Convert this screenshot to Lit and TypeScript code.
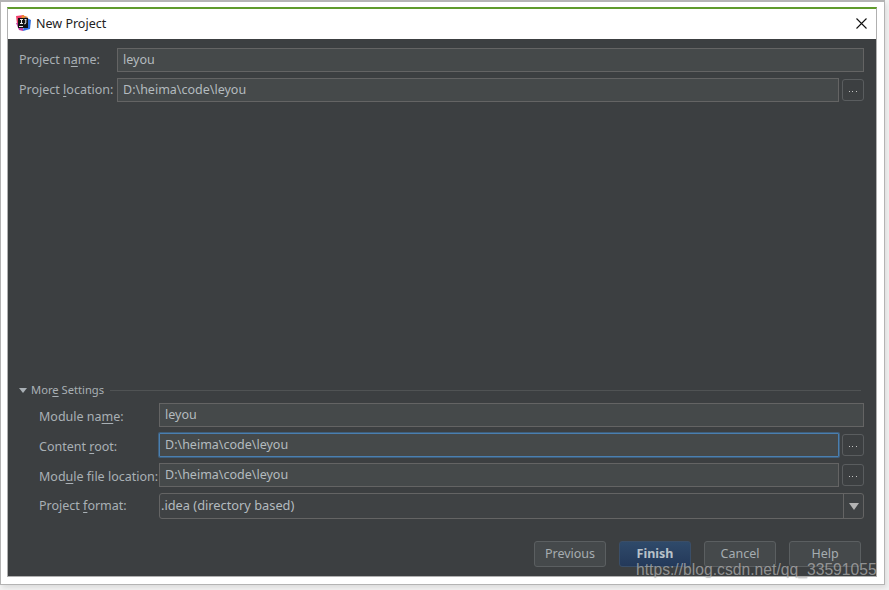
import { LitElement, html, css } from "lit";
import { customElement } from "lit/decorators.js";

@customElement("app-root")
export class AppRoot extends LitElement {
  static styles = css`
    :host { display: block; width: 889px; height: 590px; position: relative; overflow: hidden; background: #f4f4f4;
      font-family: "Noto Sans", "Open Sans", sans-serif; font-size: 12.5px; color: #a9b0b5; }
    * { box-sizing: border-box; }
    .frame { width: 885px; height: 585px; background: #fff; border: 1px solid #b4b4b4; border-top-width: 2px; padding: 5px 7px 6px 6px; box-shadow: 2px 3px 5px #ddd; }
    .win { height: 570px; border: 1px solid #b0b0b0; border-top: 2px solid #5f9b2c; display: flex; flex-direction: column; }
    .title { height: 30px; flex: none; background: #fff; display: flex; align-items: center; padding: 0 9px 2px 7px; color: #222; font-size: 12.5px; gap: 5px; }
    .title svg.logo { flex: none; }
    .title span { flex: 1; }
    .body { flex: 1; background: #3c3f41; display: flex; flex-direction: column; padding: 9px 12px 9px 11px; min-height: 0; }
    .row { display: flex; align-items: center; gap: 3px; height: 24px; margin-bottom: 6px; }
    .label { flex: none; white-space: nowrap; }
    .top .label { width: 95px; padding-bottom: 2px; }
    .sub { padding-left: 20px; }
    .sub .label { width: 117px; padding-top: 2px; }
    .sub.fmt .label { padding-top: 0; padding-bottom: 2px; }
    u { text-underline-offset: 2px; text-decoration-thickness: 1px; }
    .field { flex: 1; min-width: 0; height: 24px; background: #45494a; border: 1px solid #646464; padding: 0 5px 2px; display: flex; align-items: center; color: #b4bbbf; }
    .field.focus { border-color: #4a7fb0; box-shadow: 0 0 0 1px #3f5f7c; border-radius: 1px; }
    .dots { flex: none; width: 22px; height: 22px; border: 1px solid #5a5d5f; border-radius: 3px; display: flex; align-items: center; justify-content: center; padding-top: 2px; }
    .dots i { display: block; width: 8px; height: 1px; background: repeating-linear-gradient(90deg, #c4c4c4 0 1px, transparent 1px 3.5px); }
    .spacer { flex: 1; }
    .more { display: flex; align-items: center; height: 16px; margin-bottom: 5px; padding-right: 3px; gap: 4px; font-size: 11.2px; }
    .more div:nth-child(2) { padding-bottom: 2px; }
    .tri { width: 0; height: 0; border-left: 4px solid transparent; border-right: 4px solid transparent; border-top: 5px solid #a9b0b5; flex: none; }
    .more hr { flex: 1; height: 1px; margin: 0 0 0 2px; border: 0; background: #505354; }
    .select { flex: 1; height: 26px; border: 1px solid #646464; border-radius: 3px; display: flex; align-items: stretch; color: #b4bbbf; background: #3f4244; }
    .select span { flex: 1; padding-left: 1px; line-height: 22px; font-size: 12.8px; }
    .arrow { width: 20px; border-left: 1px solid #646464; display: flex; align-items: center; justify-content: center; }
    .arrow b { width: 0; height: 0; border-left: 5px solid transparent; border-right: 5px solid transparent; border-top: 7px solid #b4b4b4; }
    .sub.fmt { height: 26px; margin-bottom: 0; }
    .buttons { display: flex; justify-content: flex-end; gap: 13px; padding: 22px 3px 0 0; }
    .btn { width: 72px; height: 26px; border: 1px solid #5b5f61; border-radius: 3px; background: #45494b; display: flex; align-items: center; justify-content: center; padding-bottom: 2px; color: #a6adb1; }
    .btn.primary { background: linear-gradient(#2f4a6a, #24395a); border-color: #3a4e68; color: #b9c2c9; font-weight: 700; }
    .mark { position: absolute; left: 636px; top: 561px; font-family: "Liberation Sans", sans-serif; font-size: 15.7px; color: rgba(200, 200, 200, 0.62); white-space: nowrap; text-shadow: 0 0 1px rgba(60,60,60,.3); }
  `;

  render() {
    const dots = html`<div class="dots"><i></i></div>`;
    return html`
      <div class="frame">
        <div class="win">
          <div class="title">
            <svg class="logo" width="16" height="16" viewBox="0 0 16 16">
              <path d="M1 1 L9 0 L8 8 L2 9 Z" fill="#f0406c"/>
              <path d="M7 0 L13 2 L10 6 L6 4 Z" fill="#f08a2c"/>
              <path d="M10 2 L16 5 L15 14 L8 16 L9 8 Z" fill="#2f6fe0"/>
              <path d="M1 8 L4 15 L8 16 L8 8 Z" fill="#c03ca0"/>
              <rect x="3" y="3" width="10" height="10" fill="#111"/>
              <rect x="4" y="11" width="4" height="1" fill="#eee"/>
              <path d="M5 4.5 h3 M6.5 4.5 v4 M5 8.5 h3 M9.5 4.5 h2 M10.8 4.5 v3.5 q0 1 -1.6 .8" stroke="#eee" stroke-width="1" fill="none"/>
            </svg>
            <span>New Project</span>
            <svg width="11" height="11" viewBox="0 0 11 11"><path d="M.5 .5 L10.5 10.5 M10.5 .5 L.5 10.5" stroke="#111" stroke-width="1.1" fill="none"/></svg>
          </div>
          <div class="body">
            <div class="row top"><div class="label">Project n<u>a</u>me:</div><div class="field">leyou</div></div>
            <div class="row top"><div class="label">Project <u>l</u>ocation:</div><div class="field">D:\\heima\\code\\leyou</div>${dots}</div>
            <div class="spacer"></div>
            <div class="more"><div class="tri"></div><div>Mor<u>e</u> Settings</div><hr /></div>
            <div class="row sub"><div class="label">Module na<u>m</u>e:</div><div class="field">leyou</div></div>
            <div class="row sub"><div class="label">Content <u>r</u>oot:</div><div class="field focus">D:\\heima\\code\\leyou</div>${dots}</div>
            <div class="row sub"><div class="label">Mod<u>u</u>le file location:</div><div class="field">D:\\heima\\code\\leyou</div>${dots}</div>
            <div class="row sub fmt"><div class="label">Project <u>f</u>ormat:</div><div class="select"><span>.idea (directory based)</span><div class="arrow"><b></b></div></div></div>
            <div class="buttons">
              <div class="btn">Previous</div>
              <div class="btn primary">Finish</div>
              <div class="btn">Cancel</div>
              <div class="btn">Help</div>
            </div>
          </div>
        </div>
      </div>
      <div class="mark">https://blog.csdn.net/qq_33591055</div>
    `;
  }
}
